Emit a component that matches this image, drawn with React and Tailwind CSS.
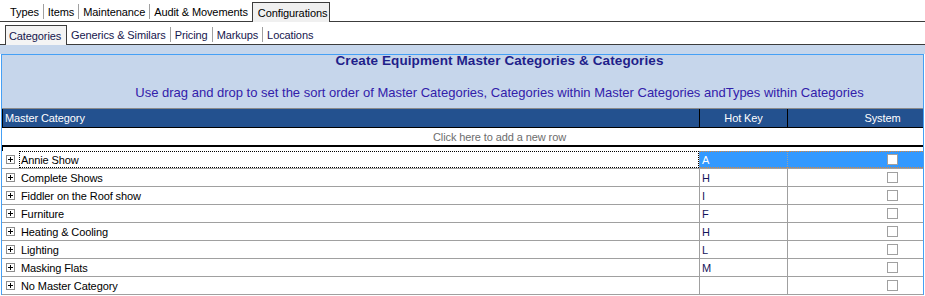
import React from "react";

const topTabs = ["Types", "Items", "Maintenance", "Audit & Movements"];
const subTabs = ["Generics & Similars", "Pricing", "Markups", "Locations"];

const rows = [
  { name: "Annie Show", key: "A", selected: true },
  { name: "Complete Shows", key: "H" },
  { name: "Fiddler on the Roof show", key: "I" },
  { name: "Furniture", key: "F" },
  { name: "Heating & Cooling", key: "H" },
  { name: "Lighting", key: "L" },
  { name: "Masking Flats", key: "M" },
  { name: "No Master Category", key: "" },
];

const Expander = () => (
  <div className="w-[9px] h-[9px] border border-[#8c8c8c] bg-white flex items-center justify-center shrink-0">
    <svg width="7" height="7" viewBox="0 0 7 7">
      <path d="M1 3.5H6M3.5 1V6" stroke="#000" strokeWidth="1" />
    </svg>
  </div>
);

const Checkbox = () => (
  <div className="w-[11px] h-[11px] border border-[#a0a0a0] bg-white" />
);

const GridRow = ({ row }) => (
  <div className="flex h-[18px] border-b border-[#a0a0a0] bg-white">
    <div className="w-[697px] flex items-center pl-[4px]">
      <Expander />
      <div
        className={`ml-[4px] flex-1 h-full flex items-center pl-[1px] pt-[2px] ${
          row.selected ? "border border-dotted border-black" : "border border-transparent"
        }`}
      >
        {row.name}
      </div>
    </div>
    <div
      className={`w-[88px] border-l border-[#a0a0a0] flex items-center pl-[2px] pt-[2px] ${
        row.selected ? "bg-[#3399ff] text-white border-y border-y-[#d9873a] border-dotted" : "text-[#14145a]"
      }`}
    >
      {row.key}
    </div>
    <div
      className={`w-[210px] border-l border-[#a0a0a0] flex items-center justify-center ${
        row.selected ? "bg-[#3399ff] border-y border-y-[#d9873a] border-dotted" : ""
      }`}
    >
      <Checkbox />
    </div>
  </div>
);

export default function App() {
  return (
    <div className="w-[925px] h-[296px] overflow-hidden bg-white text-[11px] tracking-[-0.1px] text-black font-['Liberation_Sans',Arial,sans-serif]">
      {/* top tabs */}
      <div className="flex items-end h-[22px] border-b border-[#3c3c3c] pl-[6px]">
        {topTabs.map((t, i) => (
          <div key={t} className="flex items-center h-[20px]">
            {i > 0 && <div className="w-px h-[15px] bg-[#a0a0a0]" />}
            <span className="px-[4px] pt-[2px] leading-[18px]">{t}</span>
          </div>
        ))}
        <div className="h-[20px] -mb-px w-[78px] border border-b-0 border-[#3c3c3c] bg-[#f0f0f0] pl-[5px] pt-[1px] leading-[18px]">
          Configurations
        </div>
      </div>

      {/* sub tabs */}
      <div className="flex items-end h-[23px] border-b border-[#3c3c3c] pl-[5px] text-[#16164d]">
        <div className="h-[20px] -mb-px w-[62px] border border-b-0 border-[#3c3c3c] bg-[#f4f4f4] pl-[3px] pt-[1px] leading-[18px]">
          Categories
        </div>
        {subTabs.map((t, i) => (
          <div key={t} className="flex items-center h-[20px]">
            {i > 0 && <div className="w-px h-[15px] bg-[#a0a0a0]" />}
            <span className="px-[4px] pt-[2px] leading-[18px]">{t}</span>
          </div>
        ))}
      </div>

      {/* panel */}
      <div className="h-[9px] bg-[#c6d6eb]" />
      <div className="ml-px w-[923px] border-x border-t border-[#45a0f5] overflow-hidden">
        <div className="w-[995px]">
          <div className="h-[54px] bg-[#c6d6eb] border-b border-[#8a8a8a] flex flex-col items-center">
            <div className="mt-[-1px] text-[13.5px] leading-[14px] font-bold tracking-[0.1px] text-[#1f1f8a]">
              Create Equipment Master Categories &amp; Categories
            </div>
            <div className="mt-[18px] text-[13px] leading-[14px] tracking-[0px] text-[#3220aa]">
              Use drag and drop to set the sort order of Master Categories, Categories within Master Categories andTypes within Categories
            </div>
          </div>

          {/* header */}
          <div className="flex h-[19px] bg-[#23518f] text-white border-l border-b border-black">
            <div className="w-[696px] flex items-center pl-[2px]">Master Category</div>
            <div className="w-[88px] border-l border-black flex items-center justify-center">Hot Key</div>
            <div className="w-[210px] border-l border-black flex items-center justify-center pr-[20px]">System</div>
          </div>

          <div className="h-[17px] flex items-center justify-center pt-[2px] text-[#6d6d6d] bg-white">
            Click here to add a new row
          </div>
          <div className="h-[6px] border-t-2 border-l border-black bg-white" />

          {rows.map((r) => (
            <GridRow key={r.name} row={r} />
          ))}
        </div>
      </div>
    </div>
  );
}
